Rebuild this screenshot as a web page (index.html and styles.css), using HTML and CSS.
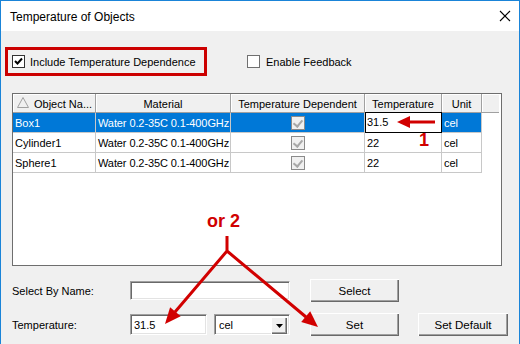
FILE: index.html
```html
<!DOCTYPE html>
<html>
<head>
<meta charset="utf-8">
<link rel="stylesheet" href="styles.css">
</head>
<body>
<div class="window">
  <div class="titlebar">
    <span class="title">Temperature of Objects</span>
    <svg class="close" width="12" height="12" viewBox="0 0 12 12"><path d="M1 1 L11 11 M11 1 L1 11" stroke="#000" stroke-width="1.1" fill="none"/></svg>
  </div>
  <div class="client">
    <div class="toprow">
      <label class="chk hl"><span class="box checked"><svg width="9" height="9" viewBox="0 0 9 9"><path d="M1 4 L3.5 6.5 L8 1.5" stroke="#000" stroke-width="2" fill="none"/></svg></span>Include Temperature Dependence</label>
      <label class="chk fb"><span class="box"></span>Enable Feedback</label>
    </div>

    <div class="grid">
      <div class="row head">
        <div class="hc c1"><svg class="sort" width="12" height="11" viewBox="0 0 12 11"><path d="M6 0.5 L11.5 10.5 L0.5 10.5 Z" fill="none" stroke="#a0a0a0"/></svg>Object Na...</div>
        <div class="hc c2">Material</div>
        <div class="hc c3">Temperature Dependent</div>
        <div class="hc c4">Temperature</div>
        <div class="hc c5">Unit</div>
        <div class="hc c6"></div>
      </div>
      <div class="row sel">
        <div class="dc c1">Box1</div>
        <div class="dc c2">Water 0.2-35C 0.1-400GHz</div>
        <div class="dc c3"><span class="gbox"></span></div>
        <div class="dc c4 edit">31.5</div>
        <div class="dc c5">cel</div>
      </div>
      <div class="row">
        <div class="dc c1">Cylinder1</div>
        <div class="dc c2">Water 0.2-35C 0.1-400GHz</div>
        <div class="dc c3"><span class="gbox"></span></div>
        <div class="dc c4">22</div>
        <div class="dc c5">cel</div>
      </div>
      <div class="row">
        <div class="dc c1">Sphere1</div>
        <div class="dc c2">Water 0.2-35C 0.1-400GHz</div>
        <div class="dc c3"><span class="gbox"></span></div>
        <div class="dc c4">22</div>
        <div class="dc c5">cel</div>
      </div>
    </div>

    <div class="form">
      <div class="lbl">Select By Name:</div>
      <div class="field wide"></div>
      <div class="btn b1">Select</div>
      <div></div>

      <div class="lbl">Temperature:</div>
      <div class="pair">
        <div class="field small">31.5</div>
        <div class="field combo">cel<span class="drop"><svg width="7" height="4" viewBox="0 0 7 4"><path d="M0 0 L7 0 L3.5 4 Z" fill="#000"/></svg></span></div>
      </div>
      <div class="btn b1 tall">Set</div>
      <div class="btn b2 tall">Set Default</div>
    </div>
  </div>

  <svg class="annot" width="520" height="344" viewBox="0 0 520 344">
    <g fill="#d10000" stroke="#d10000">
      <path d="M435 122 L407 122" stroke-width="3" fill="none"/>
      <path d="M397 122 L410 116 L410 128 Z" stroke="none"/>
      <path d="M227 236 L227 251 L175 312 M227 251 L306 317" stroke-width="3" fill="none" stroke-linejoin="round"/>
      <path d="M165 324 L180.7 316.3 L170.1 307.3 Z" stroke="none"/>
      <path d="M318 327 L301.2 322.1 L310.2 311.3 Z" stroke="none"/>
    </g>
  </svg>
  <span class="note n1">1</span>
  <span class="note n2">or 2</span>
</div>
</body>
</html>
```

FILE: styles.css
```css
* { box-sizing: border-box; }
html, body { margin: 0; padding: 0; }
body {
  width: 520px;
  height: 344px;
  overflow: hidden;
  font-family: "Liberation Sans", Arial, sans-serif;
  font-size: 11px;
  color: #000;
  background: #f0f0f0;
}
.window {
  position: relative;
  width: 520px;
  height: 344px;
  border: 1px solid #1a84d8;
  border-bottom: none;
  display: flex;
  flex-direction: column;
}
.titlebar {
  height: 30px;
  background: #fff;
  display: flex;
  align-items: center;
  padding: 0 10px 0 9px;
  flex: none;
}
.title { font-size: 12px; flex: 1; padding-top: 1px; }
.close { margin-right: -2px; }
.client {
  flex: 1;
  background: #f0f0f0;
  padding: 16px 0 0 11px;
}
.toprow {
  display: flex;
  align-items: center;
  height: 29px;
  margin-left: -7px;
}
.chk { display: flex; align-items: center; white-space: nowrap; }
.hl {
  border: 3px solid #cc0000;
  width: 202px;
  height: 29px;
  padding-left: 4px;
}
.fb { margin-left: 40px; }
.box {
  width: 13px;
  height: 13px;
  background: #fff;
  border: 1px solid #333;
  margin-right: 5px;
  display: flex;
  align-items: center;
  justify-content: center;
  flex: none;
}
.fb .box { border-color: #707070; margin-right: 6px; }

.grid {
  margin-top: 17px;
  width: 490px;
  height: 173px;
  border: 1px solid #6e6e6e;
  background: #fff;
}
.row {
  display: grid;
  grid-template-columns: 83px 135px 134px 77px 40px 17px;
  height: 20px;
}
.row.head { height: 19px; }
.hc {
  background: #f0f0f0;
  border-right: 1px solid #a0a0a0;
  border-bottom: 1px solid #a0a0a0;
  box-shadow: inset 1px 1px #fff;
  display: flex;
  align-items: center;
  justify-content: center;
  white-space: nowrap;
  overflow: hidden;
  padding-top: 1px;
}
.hc.c1 { justify-content: flex-start; padding-left: 4px; }
.sort { margin-right: 5px; margin-top: -2px; }
.hc.c6 { border-right: none; }
.dc {
  border-right: 1px solid #c8c8c8;
  border-bottom: 1px solid #c8c8c8;
  display: flex;
  align-items: center;
  padding-left: 2px;
  white-space: nowrap;
  overflow: hidden;
  font-size: 11px;
}
.dc.c2 { letter-spacing: -0.1px; }
.dc.c3 { justify-content: center; padding-left: 0; }
.sel .dc { background: #0078d7; color: #fff; }
.sel .dc.edit {
  background: #fff;
  color: #000;
  outline: 1px solid #000;
  outline-offset: -1px;
  border-right-color: #000;
  margin-top: -1px;
  height: 21px;
}
.gbox {
  width: 14px;
  height: 14px;
  border: 1px solid #8a8a8a;
  background: #f0f0f0;
  position: relative;
}
.gbox::after {
  content: "";
  position: absolute;
  left: 3px;
  top: 1px;
  width: 4px;
  height: 7px;
  border-right: 2px solid #a8a8a8;
  border-bottom: 2px solid #a8a8a8;
  transform: rotate(40deg);
}

.form {
  display: grid;
  grid-template-columns: 118px 160px 109px 109px;
  margin-top: 13px;
  row-gap: 11px;
  align-items: center;
}
.b1 { margin-left: 20px; width: 89px; }
.b2 { margin-left: 19px; width: 90px; }
.lbl { white-space: nowrap; }
.field {
  height: 19px;
  background: #fff;
  border-top: 1px solid #a0a0a0;
  border-left: 1px solid #a0a0a0;
  border-right: 1px solid #fff;
  border-bottom: 1px solid #fff;
  box-shadow: inset 1px 1px #696969, inset -1px -1px #e3e3e3;
  padding-left: 3px;
  display: flex;
  align-items: center;
  font-size: 11px;
}
.pair { display: flex; gap: 7px; }
.field.small { width: 77px; height: 21px; }
.field.combo { width: 76px; height: 21px; position: relative; padding-left: 4px; }
.drop {
  position: absolute;
  right: 2px;
  top: 2px;
  width: 16px;
  height: 17px;
  background: #f0f0f0;
  box-shadow: inset 1px 1px #fff, inset -1px -1px #696969, inset -2px -2px #a0a0a0;
  display: flex;
  align-items: center;
  justify-content: center;
}
.btn {
  height: 23px;
  background: #f0f0f0;
  box-shadow: inset 1px 1px #fff, inset -1px -1px #696969, inset -2px -2px #a0a0a0;
  display: flex;
  align-items: center;
  justify-content: center;
  font-size: 11.5px;
}

.annot { position: absolute; left: -1px; top: -1px; pointer-events: none; }
.note {
  position: absolute;
  color: #d10000;
  font-weight: bold;
  font-size: 18px;
  line-height: 1;
}
.n1 { left: 418px; top: 130px; }
.n2 { left: 206px; top: 211px; }
```
